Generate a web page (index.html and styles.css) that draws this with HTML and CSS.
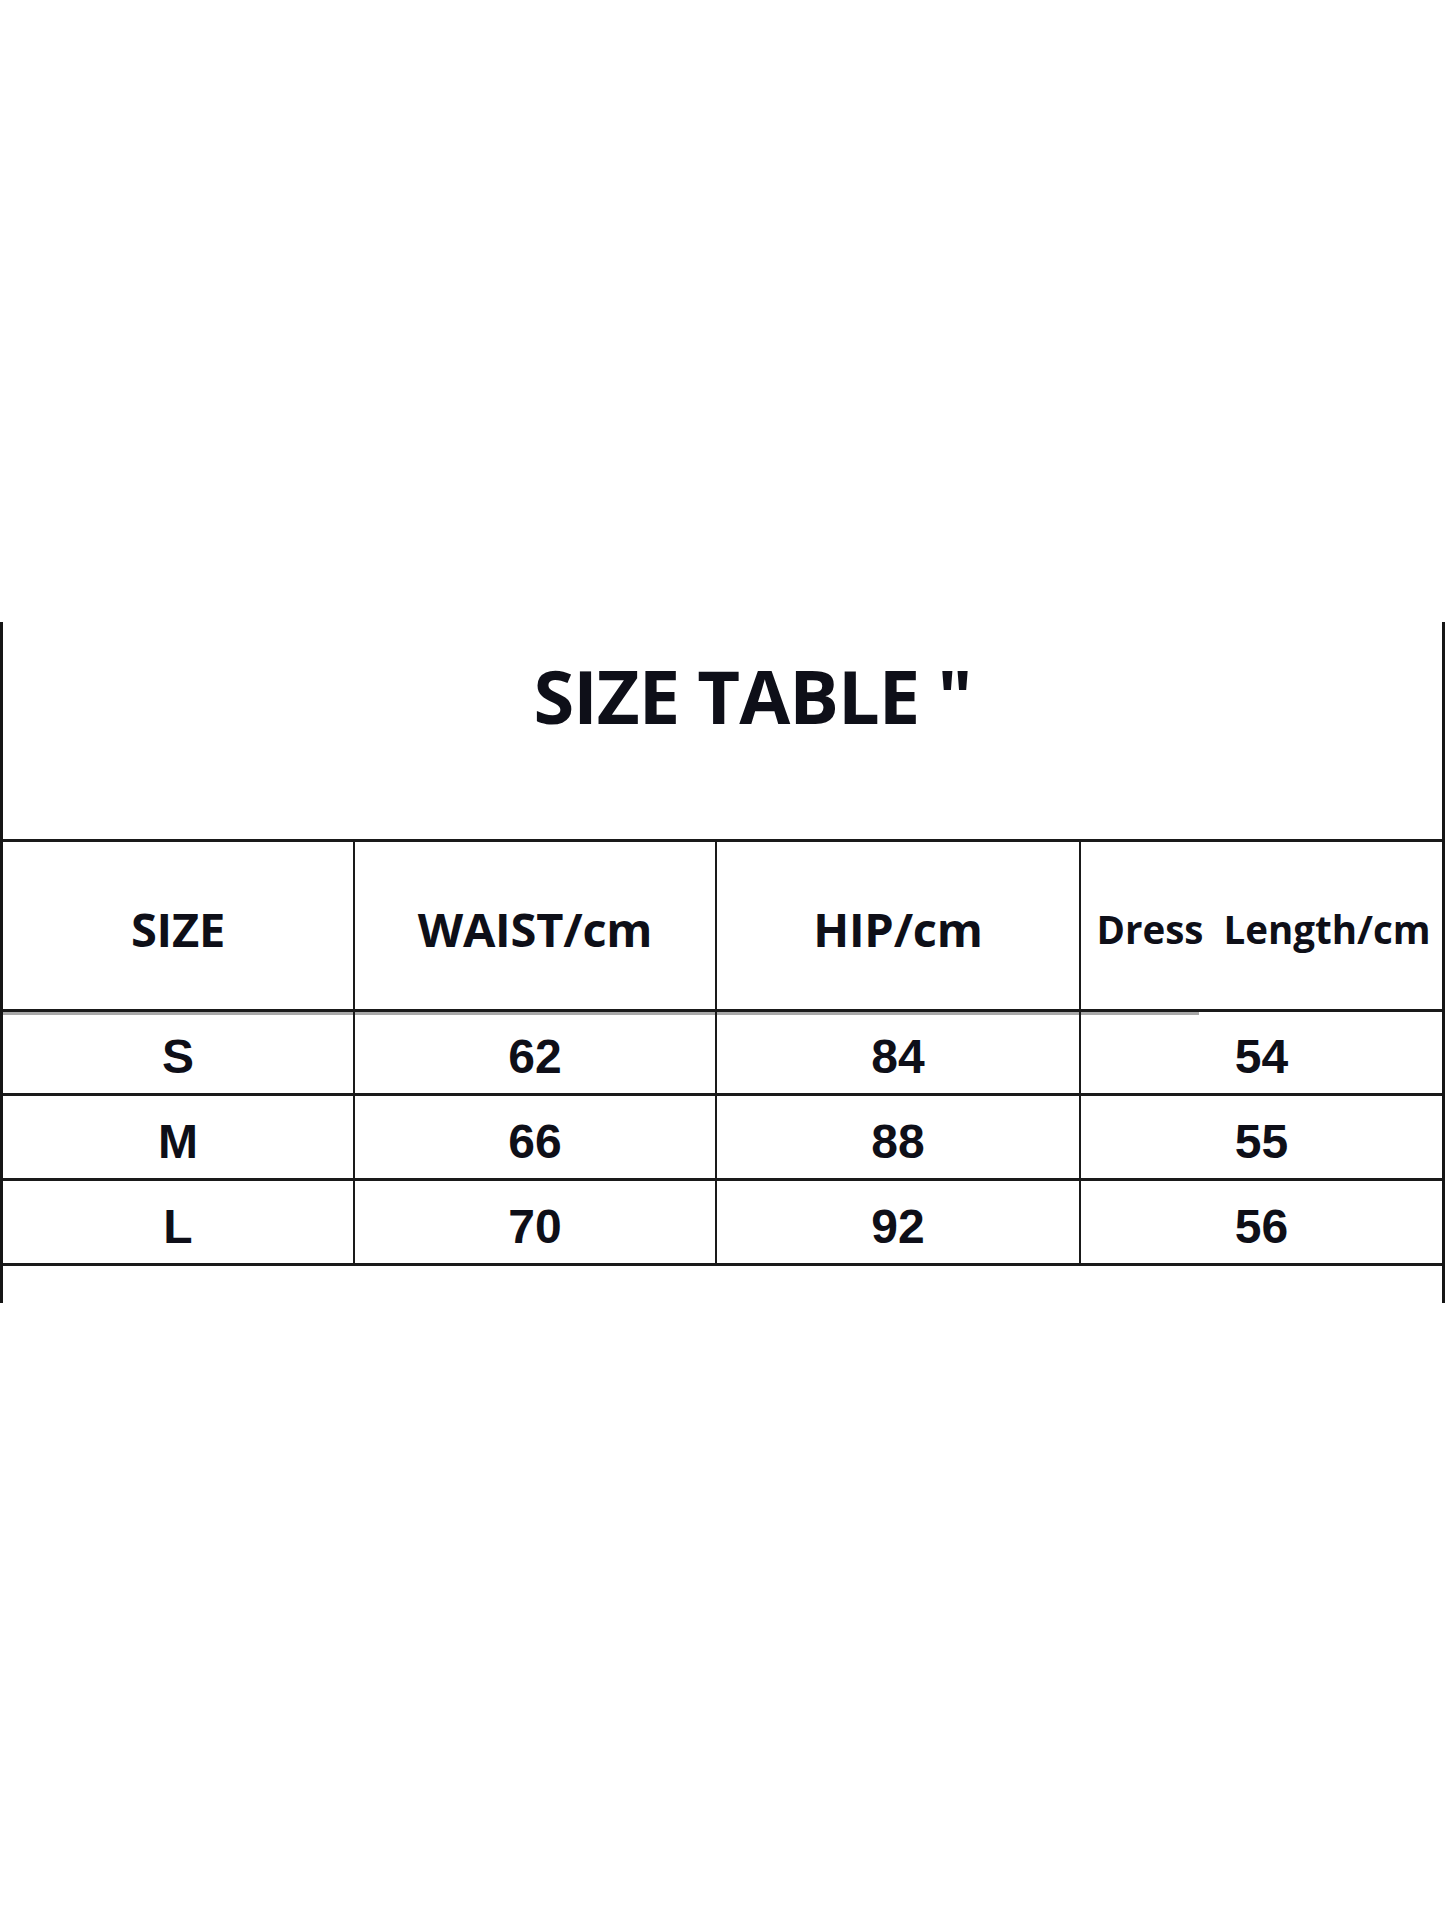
FILE: index.html
```html
<!DOCTYPE html>
<html lang="en">
<head>
<meta charset="utf-8">
<title>Size Table</title>
<link rel="stylesheet" href="styles.css">
</head>
<body>
<div class="page">
  <div class="sheet">
    <div class="title"><span>SIZE TABLE "</span></div>
    <div class="row head">
      <div class="cell">SIZE</div>
      <div class="cell">WAIST/cm</div>
      <div class="cell">HIP/cm</div>
      <div class="cell small">Dress&nbsp; Length/cm</div>
    </div>
    <div class="row data first">
      <div class="cell">S</div>
      <div class="cell">62</div>
      <div class="cell">84</div>
      <div class="cell">54</div>
    </div>
    <div class="row data">
      <div class="cell">M</div>
      <div class="cell">66</div>
      <div class="cell">88</div>
      <div class="cell">55</div>
    </div>
    <div class="row data">
      <div class="cell">L</div>
      <div class="cell">70</div>
      <div class="cell">92</div>
      <div class="cell">56</div>
    </div>
    <div class="tail"></div>
  </div>
</div>
</body>
</html>
```

FILE: styles.css
```css
html, body {
  margin: 0;
  padding: 0;
  background: #ffffff;
}

.page {
  width: 1445px;
  padding-top: 622px;
}

.sheet {
  box-sizing: border-box;
  width: 1445px;
  height: 681px;
  border-left: 3px solid #151515;
  border-right: 3px solid #151515;
  color: #0e0f18;
}

.title {
  height: 217px;
  display: flex;
  align-items: center;
  justify-content: center;
  padding-left: 60px;
  padding-bottom: 70px;
  box-sizing: border-box;
  font-family: "Open Sans", "Noto Sans", sans-serif;
  font-weight: 700;
  font-size: 74px;
  letter-spacing: -1px;
}

.row {
  display: grid;
  grid-template-columns: 352px 362px 364px 1fr;
  border-top: 3px solid #1a1a1a;
  box-sizing: border-box;
}

.cell {
  display: flex;
  align-items: center;
  justify-content: center;
  border-right: 2px solid #1a1a1a;
  box-sizing: border-box;
  white-space: nowrap;
}

.cell:last-child {
  border-right: none;
}

.head {
  height: 170px;
  font-family: "Open Sans", "Noto Sans", sans-serif;
  font-weight: 700;
  font-size: 47px;
  letter-spacing: -0.2px;
}

.head .cell {
  padding-top: 6px;
}

.head .small {
  font-size: 38.5px;
  letter-spacing: 0;
  padding-left: 4px;
}

.data {
  height: 85px;
  font-family: "Liberation Sans", Arial, sans-serif;
  font-weight: 700;
  font-size: 48px;
}

.data .cell {
  padding-top: 8px;
}

.data.first {
  height: 84px;
  background: linear-gradient(#a8a8a8, #a8a8a8) no-repeat 0 0 / 1196px 3px;
}

.tail {
  border-top: 3px solid #1a1a1a;
  height: 40px;
  box-sizing: border-box;
}
```
